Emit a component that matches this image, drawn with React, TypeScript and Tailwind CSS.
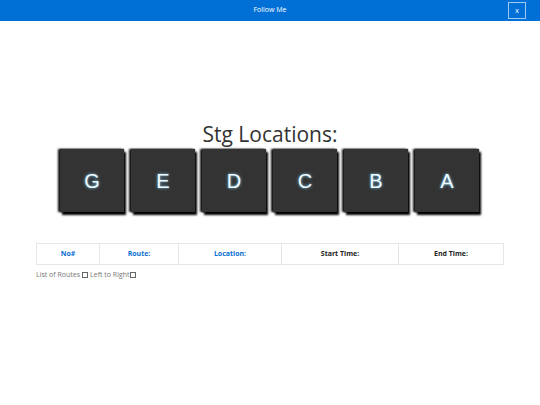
import React from 'react';

const keys = ['G', 'E', 'D', 'C', 'B', 'A'];

const columns = [
  { label: 'No#', width: 'w-[62px]', blue: true },
  { label: 'Route:', width: 'w-[79px]', blue: true },
  { label: 'Location:', width: 'w-[103px]', blue: true },
  { label: 'Start Time:', width: 'w-[117px]', blue: false },
  { label: 'End Time:', width: 'flex-1', blue: false },
];

export default function App() {
  return (
    <div className="w-[540px] h-[405px] bg-white font-['Open_Sans',sans-serif]">
      {/* Header */}
      <div className="relative h-[21px] bg-[#0070d7] flex items-center justify-center">
        <span className="text-[7px] text-white">Follow Me</span>
        <button className="absolute right-[14px] top-[2px] w-[18px] h-[17px] border border-[#9ccaf2] text-white text-[7px] leading-none flex items-center justify-center">
          x
        </button>
      </div>

      {/* Title */}
      <div className="pt-[100px] text-center text-[21px] leading-[27px] text-[#333]">Stg Locations:</div>

      {/* Keys */}
      <div className="mt-[1px] flex justify-center gap-[7px] pr-[1px]">
        {keys.map((k) => (
          <div
            key={k}
            className="w-[64px] h-[63px] bg-[#333333] flex items-center justify-center shadow-[2px_3px_2px_#000,-2px_0_2px_#111,0_0_1px_#000]"
          >
            <span className="font-['Liberation_Sans',Arial,sans-serif] text-[20px] text-[#eefaff] [text-shadow:0_0_3px_#7fd4ff]">
              {k}
            </span>
          </div>
        ))}
      </div>

      {/* Table */}
      <div className="mx-[36px] mt-[31px] flex h-[22px] border border-[#e6e6e6]">
        {columns.map((c, i) => (
          <div
            key={c.label}
            className={`${c.width} flex items-center justify-center text-[7px] font-bold ${c.blue ? 'text-[#0a6fd0]' : 'text-[#222]'} ${i > 0 ? 'border-l border-[#e6e6e6]' : ''}`}
          >
            {c.label}
          </div>
        ))}
      </div>

      <div className="ml-[36px] mt-[5px] flex items-center text-[7px] text-[#777]">
        <span>List of Routes</span>
        <span className="ml-[2px] inline-block w-[6px] h-[6px] border border-[#666]" />
        <span className="ml-[2px]">Left to Right</span>
        <span className="inline-block w-[6px] h-[6px] border border-[#666]" />
      </div>
    </div>
  );
}
